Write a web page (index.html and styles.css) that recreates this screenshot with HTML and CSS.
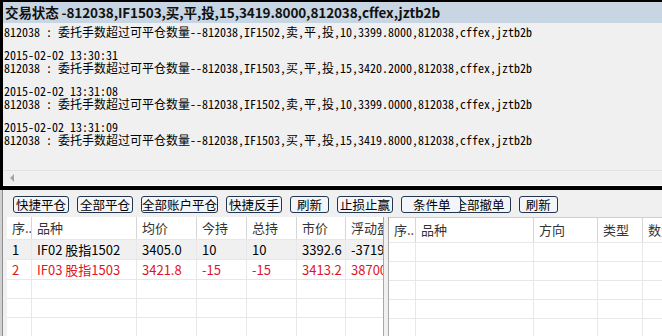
FILE: index.html
```html
<!DOCTYPE html>
<html lang="zh-CN">
<head>
  <meta charset="UTF-8">
  <title>交易状态</title>
  <link rel="stylesheet" href="styles.css">
</head>
<body>

<div class="log-window">
  <div class="log-title">交易状态 -812038,IF1503,买,平,投,15,3419.8000,812038,cffex,jztb2b</div>
  <div class="log-body">
    <div class="entry">
      <div>812038 : 委托手数超过可平仓数量--812038,IF1502,卖,平,投,10,3399.8000,812038,cffex,jztb2b</div>
    </div>
    <div class="entry">
      <div>2015-02-02 13:30:31</div>
      <div>812038 : 委托手数超过可平仓数量--812038,IF1503,买,平,投,15,3420.2000,812038,cffex,jztb2b</div>
    </div>
    <div class="entry">
      <div>2015-02-02 13:31:08</div>
      <div>812038 : 委托手数超过可平仓数量--812038,IF1502,卖,平,投,10,3399.0000,812038,cffex,jztb2b</div>
    </div>
    <div class="entry">
      <div>2015-02-02 13:31:09</div>
      <div>812038 : 委托手数超过可平仓数量--812038,IF1503,买,平,投,15,3419.8000,812038,cffex,jztb2b</div>
    </div>
  </div>
  <div class="hscroll"><span class="scroll-arrow"></span></div>
</div>

<div class="trade-panel">
  <div class="toolbar">
    <button class="btn">快捷平仓</button>
    <button class="btn">全部平仓</button>
    <button class="btn btn-tight">全部账户平仓</button>
    <button class="btn">快捷反手</button>
    <button class="btn btn-short">刷新</button>
    <button class="btn">止损止赢</button>
    <button class="btn btn-cond">条件单</button>
    <button class="btn btn-under">全部撤单</button>
    <button class="btn btn-short">刷新</button>
  </div>

  <div class="grids">
    <div class="grid grid-pos">
      <div class="row head">
        <span>序..</span><span>品种</span><span>均价</span><span>今持</span><span>总持</span><span>市价</span><span>浮动盈亏</span>
      </div>
      <div class="row data selected">
        <span>1</span><span>IF02 股指1502</span><span>3405.0</span><span>10</span><span>10</span><span>3392.6</span><span>-37190.0</span>
      </div>
      <div class="row data short">
        <span>2</span><span>IF03 股指1503</span><span>3421.8</span><span>-15</span><span>-15</span><span>3413.2</span><span>38700.0</span>
      </div>
      <div class="row"><span></span><span></span><span></span><span></span><span></span><span></span><span></span></div>
      <div class="row"><span></span><span></span><span></span><span></span><span></span><span></span><span></span></div>
      <div class="row"><span></span><span></span><span></span><span></span><span></span><span></span><span></span></div>
      <div class="row"><span></span><span></span><span></span><span></span><span></span><span></span><span></span></div>
    </div>

    <div class="splitter"></div>

    <div class="grid grid-orders">
      <div class="row head">
        <span>序..</span><span>品种</span><span>方向</span><span>类型</span><span>数量</span>
      </div>
      <div class="row"><span></span><span></span><span></span><span></span><span></span></div>
      <div class="row"><span></span><span></span><span></span><span></span><span></span></div>
      <div class="row"><span></span><span></span><span></span><span></span><span></span></div>
      <div class="row"><span></span><span></span><span></span><span></span><span></span></div>
      <div class="row"><span></span><span></span><span></span><span></span><span></span></div>
    </div>
  </div>
</div>

</body>
</html>
```

FILE: styles.css
```css
body {
  margin: 0;
  width: 662px;
  height: 336px;
  overflow: hidden;
  background-color: #f0f0f0;
  font-family: "Noto Sans CJK SC", "Liberation Sans", sans-serif;
}

/* upper log window */
.log-window {
  height: 184px;
  border: solid #000;
  border-width: 2px 0 4px 3px;
  display: flex;
  flex-direction: column;
}

.log-title {
  height: 21px;
  line-height: 21px;
  padding-left: 2px;
  background-color: #c8d5e2;
  color: #111;
  font-weight: bold;
  font-size: 13.5px;
  letter-spacing: -0.1px;
  white-space: nowrap;
  overflow: hidden;
}

.log-body {
  flex: 1;
  padding: 2px 0 0 1px;
  overflow: hidden;
  white-space: nowrap;
  color: #000;
  font-family: "Noto Sans Mono CJK SC", "Liberation Mono", monospace;
  font-size: 12px;
  line-height: 13px;
}

.entry {
  margin-bottom: 10px;
}

.hscroll {
  height: 14px;
  border-top: 1px solid #e2e2e2;
  border-bottom: 1px solid #fff;
  display: flex;
  align-items: center;
}

.scroll-arrow {
  margin-left: 7px;
  border-right: 4px solid #a6a6a6;
  border-top: 4px solid transparent;
  border-bottom: 4px solid transparent;
}

/* lower trade panel */
.trade-panel {
  height: 146px;
  border-left: 2px solid #d0d0d0;
  box-shadow: inset 1px 0 #8e8e8e;
  display: flex;
  flex-direction: column;
}

.toolbar {
  display: flex;
  gap: 8px;
  padding: 6px 0 0 11px;
  margin-bottom: 4px;
}

.btn {
  height: 17px;
  padding: 0 2px;
  border: 1px solid #22364f;
  border-radius: 3px;
  background-color: #f3f5f8;
  color: #000;
  font-family: inherit;
  font-size: 12.5px;
  line-height: 15px;
  white-space: nowrap;
}

.btn-tight {
  padding: 0;
}

.btn-short {
  padding: 0 6px;
}

.btn-cond {
  padding: 0 9px 0 11px;
  position: relative;
  z-index: 1;
}

.btn-under {
  margin-left: -20px;
  padding: 0 5px;
}

.grids {
  flex: 1;
  display: flex;
  padding-left: 5px;
  overflow: hidden;
}

.grid {
  overflow: hidden;
  background-color: #fff;
  font-size: 13px;
}

.grid-pos {
  width: 376px;
}

.grid-orders {
  flex: 1;
  border-top: 1px solid #d0d0d0;
}

.row {
  display: grid;
  height: 18px;
  border-bottom: 1px solid #e8e8e8;
}

.grid-pos .row {
  grid-template-columns: 25px 105px 60px 50px 50px 49px 60px;
}

.grid-orders .row {
  grid-template-columns: 27px 118px 64px 45px 60px;
}

.row span {
  padding-left: 5px;
  border-right: 1px solid #e8e8e8;
  line-height: 18px;
  white-space: nowrap;
  overflow: hidden;
}

.row.head {
  height: 22px;
  color: #333;
}

.row.head span {
  line-height: 22px;
  border-right-color: #d6d6d6;
}

.grid-orders .row.head {
  height: 24px;
}

.grid-orders .row.head span {
  line-height: 24px;
}

.row.data {
  height: 19px;
}

.row.data span {
  line-height: 19px;
}

.row.selected {
  background-color: #f0f0f0;
}

.row.short {
  color: #e0141e;
}

.splitter {
  width: 4px;
  border-left: 1px solid #a8a8a8;
  border-right: 1px solid #a8a8a8;
  background-color: #f0f0f0;
}
```
